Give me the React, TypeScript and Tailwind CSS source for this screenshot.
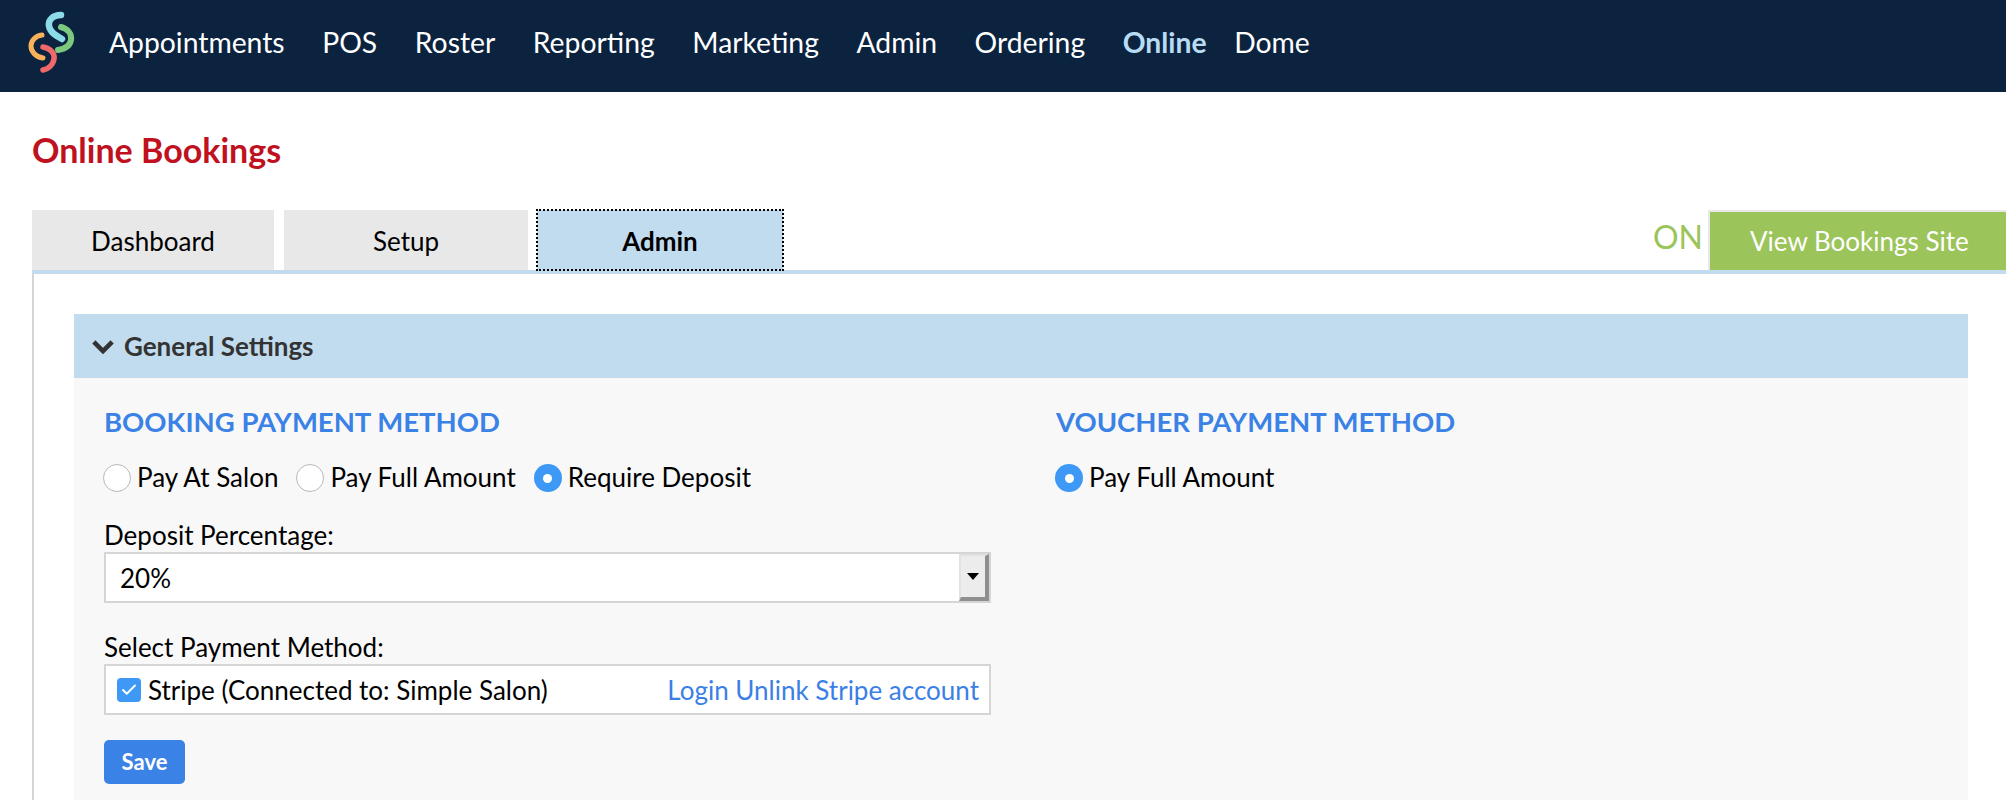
import React from "react";
import { Check } from "lucide-react";

const navItems = ["Appointments", "POS", "Roster", "Reporting", "Marketing", "Admin", "Ordering"];

function Logo() {
  return (
    <svg viewBox="0 0 60 64" className="w-[60px] h-[64px] mb-[8px] mr-[21px] shrink-0" fill="none" strokeLinecap="round">
      <path d="M33 5 C24 5 20 11 21 16 C22 22 27 25 34 29" stroke="#8cdbe8" strokeWidth="6.5" />
      <path d="M33 17 C40 19 44 24 43 30 C42 36 37 39 30 40" stroke="#7cc87e" strokeWidth="6" />
      <path d="M14 25 C7 26 3 31 3 36 C3 42 8 47 15 48" stroke="#fbb05a" strokeWidth="5" />
      <path d="M15 37 C22 38 27 43 26 49 C25 55 20 59 15 60" stroke="#f0696a" strokeWidth="5.5" />
    </svg>
  );
}

function Radio({ label, checked }: { label: string; checked?: boolean }) {
  return (
    <div className="flex items-center gap-[6px]">
      {checked ? (
        <span className="w-[28px] h-[28px] rounded-full bg-[#3d99f5] flex items-center justify-center">
          <span className="w-[9px] h-[9px] rounded-full bg-white" />
        </span>
      ) : (
        <span className="w-[28px] h-[28px] rounded-full bg-white border border-[#b9b9b9]" />
      )}
      <span className="-mt-[2px]">{label}</span>
    </div>
  );
}

export default function App() {
  return (
    <div className="h-[800px] overflow-hidden bg-white text-black text-[26px] leading-[32px] font-['Lato',sans-serif]">
      <header className="h-[92px] bg-[#0c2340] flex items-center pl-[28px] text-white text-[28.3px]">
        <Logo />
        <nav className="flex items-center gap-[37.6px] mb-[9px]">
          {navItems.map((item) => (
            <a key={item}>{item}</a>
          ))}
          <a className="font-bold text-[#b9dcf5]">Online</a>
          <a className="-ml-[10px]">Dome</a>
        </nav>
      </header>

      <h1 className="pl-[32px] pt-[37px] text-[34px] leading-[42px] font-bold text-[#c0111f]">Online Bookings</h1>

      <div className="mt-[39px] pl-[32px] flex items-end h-[60px]">
        <div className="w-[242px] h-[60px] pt-[2px] bg-[#e8e8e8] flex items-center justify-center">Dashboard</div>
        <div className="ml-[10px] w-[244px] h-[60px] pt-[2px] bg-[#e8e8e8] flex items-center justify-center">Setup</div>
        <div className="ml-[9px] w-[246px] h-[60px] pt-[2px] bg-[#c1dbef] outline-2 -outline-offset-1 outline-dotted outline-black flex items-center justify-center font-bold">
          Admin
        </div>
        <div className="ml-auto flex items-end">
          <span className="text-[32px] leading-[60px] text-[#9bc45a] mr-[5px] mb-[3px]">ON</span>
          <div className="w-[298px] h-[60px] bg-[#9bc45a] border-t-2 border-l-2 border-[#e8e8e8] text-white text-[26px] flex items-center pl-[40px]">
            View Bookings Site
          </div>
        </div>
      </div>

      <div className="ml-[32px] border-t-4 border-[#c1dbef]">
        <div className="border-l-2 border-[#d5d5d5] pl-[40px] pr-[38px] pt-[40px]">
          <div className="h-[64px] bg-[#c1dbef] flex items-center pl-[18px] font-bold text-[#333]">
            <svg viewBox="0 0 24 16" className="w-[22px] h-[15px] mr-[10px]" fill="none" stroke="#333" strokeWidth="5">
              <path d="M2 3 L12 13 L22 3" />
            </svg>
            General Settings
          </div>

          <div className="h-[422px] bg-[#f8f8f8] flex pl-[30px]">
            <div className="w-[952px]">
              <h2 className="pt-[27px] text-[27.5px] leading-[34px] font-bold text-[#3b82e6]">BOOKING PAYMENT METHOD</h2>
              <div className="mt-[24px] flex -ml-[1px] gap-[18px]">
                <Radio label="Pay At Salon" />
                <Radio label="Pay Full Amount" />
                <Radio label="Require Deposit" checked />
              </div>
              <label className="block mt-[26px]">Deposit Percentage:</label>
              <div className="mt-[1px] w-[887px] h-[51px] border-2 border-[#d5d5d5] bg-white flex items-center pl-[14px]">
                20%
                <div className="ml-auto w-[30px] h-[47px] bg-[#ececec] border-t-2 border-l-2 border-r-4 border-b-4 border-t-[#e2e2e2] border-l-[#e2e2e2] border-r-[#8f8f8f] border-b-[#8f8f8f] flex items-center justify-center">
                  <span className="w-0 h-0 border-x-[6px] border-x-transparent border-t-[7px] border-t-black" />
                </div>
              </div>
              <label className="block mt-[28px]">Select Payment Method:</label>
              <div className="mt-[1px] w-[887px] h-[51px] border-2 border-[#d5d5d5] bg-white flex items-center pl-[11px] pr-[10px]">
                <span className="w-[24px] h-[24px] rounded-[4px] bg-[#3d99f5] flex items-center justify-center">
                  <Check className="w-[18px] h-[18px] text-white" strokeWidth={2.5} />
                </span>
                <span className="ml-[7px]">Stripe (Connected to: Simple Salon)</span>
                <a className="ml-auto text-[#3b7fe6]">Login Unlink Stripe account</a>
              </div>
              <button className="block mt-[25px] w-[81px] h-[44px] rounded-[5px] bg-[#3b82e6] text-white font-bold text-[22px]">Save</button>
            </div>
            <div>
              <h2 className="pt-[27px] text-[27.5px] leading-[34px] font-bold text-[#3b82e6]">VOUCHER PAYMENT METHOD</h2>
              <div className="mt-[24px] flex -ml-[1px]">
                <Radio label="Pay Full Amount" checked />
              </div>
            </div>
          </div>
        </div>
      </div>
    </div>
  );
}
